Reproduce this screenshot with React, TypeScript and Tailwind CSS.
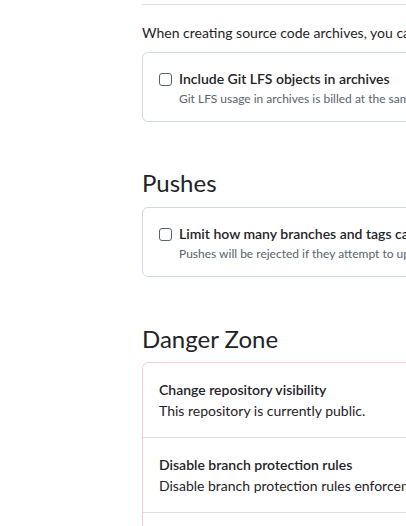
import React from 'react';

const font = { fontFamily: 'Lato, "Segoe UI", sans-serif' };

function CheckRow({ label, note }: { label: string; note: string }) {
  return (
    <div className="rounded-md border border-[#d1d9e0] px-4 pt-4 pb-[13px]">
      <div className="flex items-start gap-[7px]">
        <span className="mt-[4px] h-[13px] w-[13px] shrink-0 rounded-[3px] border border-[#59636e] bg-white" />
        <div>
          <div className="whitespace-nowrap text-sm leading-5 font-semibold text-[#1f2328]">{label}</div>
          <div className="mt-px whitespace-nowrap text-xs leading-[18px] text-[#59636e]">{note}</div>
        </div>
      </div>
    </div>
  );
}

function DangerRow({ title, note }: { title: string; note: string }) {
  return (
    <div className="border-t border-[#d8dee4] px-4 py-4 first:border-t-0">
      <div className="whitespace-nowrap text-sm leading-[21px] font-semibold text-[#1f2328]">{title}</div>
      <div className="whitespace-nowrap text-sm leading-[21px] text-[#1f2328]">{note}</div>
    </div>
  );
}

export default function App() {
  return (
    <div className="h-[526px] w-[406px] overflow-hidden bg-white" style={font}>
      <div className="ml-[142px] w-[720px] pt-1">
        <div className="border-t border-[#d8dee4]" />
        <p className="mt-[17px] whitespace-nowrap text-sm leading-[21px] text-[#1f2328]">
          When creating source code archives, you can choose to include files stored using Git LFS in the archive.
        </p>
        <div className="mt-[9px]">
          <CheckRow
            label="Include Git LFS objects in archives"
            note="Git LFS usage in archives is billed at the same rate as usage with the client."
          />
        </div>

        <h2 className="mt-[43px] mb-[6px] text-2xl leading-9 font-normal text-[#1f2328]">Pushes</h2>
        <CheckRow
          label="Limit how many branches and tags can be updated in a single push"
          note="Pushes will be rejected if they attempt to update more than this."
        />

        <h2 className="mt-[44px] mb-[5px] text-2xl leading-9 font-normal text-[#1f2328]">Danger Zone</h2>
        <div className="rounded-md border border-[#f5cfd2]">
          <DangerRow title="Change repository visibility" note="This repository is currently public." />
          <DangerRow
            title="Disable branch protection rules"
            note="Disable branch protection rules enforcement and APIs"
          />
          <DangerRow title="Transfer ownership" note="Transfer this repository to another user or to an organization." />
        </div>
      </div>
    </div>
  );
}
